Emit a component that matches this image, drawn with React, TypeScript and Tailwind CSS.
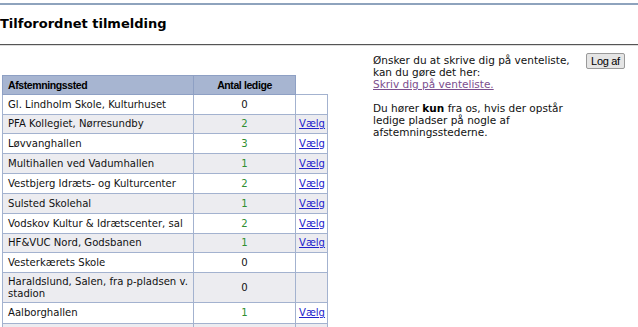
import React from "react";

const rows: { name: React.ReactNode; n: number; link: boolean; h: number }[] = [
  { name: "Gl. Lindholm Skole, Kulturhuset", n: 0, link: false, h: 20 },
  { name: "PFA Kollegiet, Nørresundby", n: 2, link: true, h: 19 },
  { name: "Løvvanghallen", n: 3, link: true, h: 20 },
  { name: "Multihallen ved Vadumhallen", n: 1, link: true, h: 20 },
  { name: "Vestbjerg Idræts- og Kulturcenter", n: 2, link: true, h: 20 },
  { name: "Sulsted Skolehal", n: 1, link: true, h: 20 },
  { name: "Vodskov Kultur & Idrætscenter, sal", n: 2, link: true, h: 20 },
  { name: "HF&VUC Nord, Godsbanen", n: 1, link: true, h: 19 },
  { name: "Vesterkærets Skole", n: 0, link: false, h: 20 },
  { name: <>Haraldslund, Salen, fra p-pladsen v.<br />stadion</>, n: 0, link: false, h: 30 },
  { name: "Aalborghallen", n: 1, link: true, h: 21 },
  { name: "Nørresundby Idrætscenter", n: 1, link: true, h: 20 },
];

export default function App() {
  return (
    <div
      className="w-[638px] h-[327px] overflow-hidden bg-white text-black"
      style={{ fontFamily: '"DejaVu Sans", Verdana, sans-serif' }}
    >
      <div className="h-[3px]" />
      <div className="h-[2px] bg-[#8ea3bd]" />
      <div className="h-[39px] flex items-center pb-[3px]">
        <h1 className="text-[13px] font-bold leading-none">Tilforordnet tilmelding</h1>
      </div>
      <div className="h-[1px] bg-[#555]" />
      <div className="h-[1px] bg-[#ddd]" />
      <div className="flex">
        <div className="w-[373px] pl-[2px] pt-[29px]">
          <table className="border-collapse table-fixed w-[325px] text-[10.1px] leading-[12px] text-[#111]">
            <colgroup>
              <col className="w-[191px]" />
              <col className="w-[102px]" />
              <col className="w-[32px]" />
            </colgroup>
            <thead>
              <tr className="h-[19px]">
                <th
                  className="border border-[#8ea0c4] bg-[#a7b5d1] text-left font-bold px-[5px] text-[10.5px] tracking-[-0.4px] text-black"
                  style={{ fontFamily: '"Liberation Sans Narrow", "Liberation Sans", Arial, sans-serif' }}
                >
                  Afstemningssted
                </th>
                <th
                  className="border border-[#8ea0c4] bg-[#a7b5d1] text-center font-bold text-[10.5px] tracking-[-0.4px] text-black"
                  style={{ fontFamily: '"Liberation Sans Narrow", "Liberation Sans", Arial, sans-serif' }}
                >
                  Antal ledige
                </th>
                <th className="border-0 bg-white"></th>
              </tr>
            </thead>
            <tbody>
              {rows.map((r, i) => (
                <tr
                  key={i}
                  style={{ height: r.h }}
                  className={i % 2 === 1 ? "bg-[#ececf0]" : "bg-white"}
                >
                  <td className="border border-[#a3b2cf] px-[5px] align-middle whitespace-nowrap">{r.name}</td>
                  <td className={`border border-[#a3b2cf] text-center align-middle ${r.n > 0 ? "text-[#2f8f2f]" : "text-[#111]"}`}>{r.n}</td>
                  <td className="border border-[#a3b2cf] px-[3px] align-middle">
                    {r.link ? <a className="text-[#2222cc] underline" href="#">Vælg</a> : null}
                  </td>
                </tr>
              ))}
            </tbody>
          </table>
        </div>
        <div className="w-[205px] pt-[8px] text-[10.5px] leading-[12px] text-[#111]">
          <p>Ønsker du at skrive dig på venteliste, kan du gøre det her:</p>
          <a className="text-[#7b4e8e] underline" href="#">Skriv dig på venteliste.</a>
          <p className="mt-[12px]">
            Du hører <b className="text-black">kun</b> fra os, hvis der opstår ledige pladser på nogle af afstemningsstederne.
          </p>
        </div>
        <div className="pt-[7px] pl-[8px]">
          <button
            className="block h-[16px] w-[39px] border border-[#9a9a9a] bg-[#e5e5e5] rounded-[2px] text-[11px] leading-none tracking-[-0.3px] text-black"
            style={{ fontFamily: '"Liberation Sans Narrow", "Liberation Sans", Arial, sans-serif' }}
          >
            Log af
          </button>
        </div>
      </div>
    </div>
  );
}
